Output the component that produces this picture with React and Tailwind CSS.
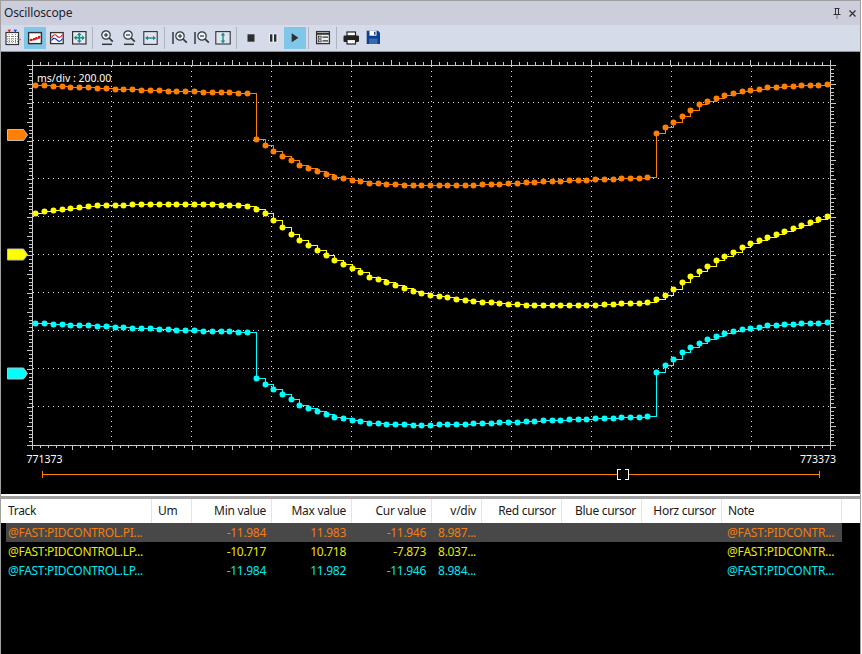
const FONT = "font-['Noto_Sans','Liberation_Sans',sans-serif]";

const xs = [];
for (let i = 0; i < 25; i++) xs.push(35 + i * 8.84);
for (let i = 0; i < 46; i++) xs.push(256 + i * 8.696);
for (let i = 0; i <= 20; i++) xs.push(656 + i * 8.55);

const orange = [[33,85],[100,88],[180,91],[255.5,93],[256,139],[265,145],[280,155],[300,165],[330,176],[370,183],[420,185.5],[470,185],[530,182],[600,179],[655.5,177],[656,133],[665,127],[680,117],[700,103],[730,93],[770,87],[830,84]];
const yellow = [[33,213],[60,209],[100,205],[150,204],[220,204.5],[250,206],[265,213],[280,226],[300,240],[330,258],[370,277],[420,293],[470,301],[520,304.5],[590,305],[650,302],[665,295],[690,276],[720,258],[750,243],[790,229],[830,215]];
const cyan = [[33,323],[100,326],[180,330],[255.5,332],[256,378],[265,384],[280,393],[300,405],[330,416],[370,423],[420,425],[470,423.5],[530,421],[600,418],[655.5,416],[656,372],[665,365],[680,353],[700,342],[730,331],[770,325],[830,322]];

function at(keys, x) {
  for (let i = 1; i < keys.length; i++) {
    if (x <= keys[i][0]) {
      const [x0, y0] = keys[i - 1];
      const [x1, y1] = keys[i];
      return y0 + ((y1 - y0) * (x - x0)) / (x1 - x0);
    }
  }
  return keys[keys.length - 1][1];
}

function Trace({ keys, color }) {
  const pts = xs.map((x) => [Math.round(x), Math.round(at(keys, x))]);
  let d = `M${pts[0][0]} ${pts[0][1]}`;
  for (let i = 1; i < pts.length; i++) d += `H${pts[i][0]}V${pts[i][1]}`;
  return (
    <g>
      <path d={d} transform="translate(.5 .5)" fill="none" stroke={color} strokeWidth="1" shapeRendering="crispEdges" />
      {pts.map(([x, y], i) => (
        <circle key={i} cx={x + 0.5} cy={y + 0.5} r="3" fill={color} />
      ))}
    </g>
  );
}

function Marker({ y, color }) {
  return (
    <path d={`M7.5 ${y - 5.5}H23.5L27.5 ${y}L23.5 ${y + 5.5}H7.5Z`} fill={color} stroke="#bdbdbd" strokeWidth="1" />
  );
}

function Chart() {
  const T = "#c8c8c8";
  const ticks = [];
  for (let i = 0; i <= 100; i++) {
    const x = 32 + i * 7.98;
    const major = i % 5 === 0;
    ticks.push(`M${Math.round(x) + 0.5} 65V${major ? 60 : 62}`);
    ticks.push(`M${Math.round(x) + 0.5} 445V${major ? 450 : 448}`);
  }
  for (let i = 0; i <= 100; i++) {
    const y = 65 + i * 3.8;
    const major = i % 5 === 0;
    ticks.push(`M32 ${Math.round(y) + 0.5}H${major ? 27 : 29}`);
    ticks.push(`M831 ${Math.round(y) + 0.5}H${major ? 836 : 834}`);
  }
  const grid = [];
  for (let i = 1; i < 10; i++) {
    grid.push(`M${32 + i * 80 - 0.5} 66V445`);
    grid.push(`M33 ${65 + i * 38 - 0.5}H830`);
  }
  return (
    <svg width="859" height="440" viewBox="1 52 859 440" className="block">
      <path d={grid.join("")} fill="none" stroke="#e0e0e0" strokeWidth="1" strokeDasharray="1 4" shapeRendering="crispEdges" />
      <path d="M32.5 65V445.5H830.5V65.5H32.5" fill="none" stroke={T} strokeWidth="1" shapeRendering="crispEdges" />
      <path d={ticks.join("")} fill="none" stroke={T} strokeWidth="1" shapeRendering="crispEdges" />
      <Marker y={135} color="#ff8000" />
      <Marker y={254.5} color="#ffff00" />
      <Marker y={373.5} color="#00ffff" />
      <Trace keys={orange} color="#ff7f00" />
      <Trace keys={yellow} color="#ffff00" />
      <Trace keys={cyan} color="#00ffff" />
      <text x="37" y="82" fill="#fff" fontSize="10.5" className={FONT}>ms/div : 200.00</text>
      <text x="26.5" y="463" fill="#fff" fontSize="10.5" className={FONT}>771373</text>
      <text x="836" y="463" textAnchor="end" fill="#fff" fontSize="10.5" className={FONT}>773373</text>
      <path d="M42.5 471V478M42 474.5H819M819.5 471V478" stroke="#ff7f00" fill="none" shapeRendering="crispEdges" />
      <rect x="618" y="470" width="11" height="9" fill="#000" />
      <path d="M621 469.5H617.5V479.5H621M625 469.5H628.5V479.5H625" stroke="#fff" fill="none" shapeRendering="crispEdges" />
    </svg>
  );
}

function Btn({ active, narrow, children }) {
  return (
    <div className={`h-[22px] flex items-center justify-center shrink-0 ${narrow ? "w-[21px]" : "w-[22px]"} ${active ? "bg-[#7fc6e9]" : ""}`}>
      <svg width="18" height="18" viewBox="0 0 18 18">{children}</svg>
    </div>
  );
}

function Sep({ className }) {
  return <div className={`w-px h-[22px] bg-[#b0b3be] shrink-0 ${className}`} />;
}

const D = "#2e3a40";
const TEAL = "#1b8a8c";

const ZoomGlass = ({ plus, cx = 8, cy = 6 }) => (
  <>
    <circle cx={cx} cy={cy} r="4.2" fill="#eef3f5" stroke={D} strokeWidth="1.2" />
    <path d={`M${cx - 2} ${cy}H${cx + 2}`} stroke={D} strokeWidth="1.2" />
    {plus && <path d={`M${cx} ${cy - 2}V${cy + 2}`} stroke={D} strokeWidth="1.2" />}
    <path d={`M${cx + 3.2} ${cy + 3.2}L${cx + 6.8} ${cy + 6.6}`} stroke={D} strokeWidth="1.7" />
  </>
);

function Toolbar() {
  return (
    <div className="h-[27px] bg-[#d6dbe9] border-b border-[#8f929b] flex items-center pl-[1px] shrink-0">
      <Btn>
        <rect x="2" y="3.5" width="12.5" height="12" fill="#fff" stroke="#333" strokeWidth="1.2" />
        <path d="M5 5V15M8.25 5V15M11.5 5V15M3 7.5H14M3 10H14M3 12.5H14" stroke="#666" strokeDasharray="1 1" strokeWidth=".8" />
        <path d="M5.3 1V3.5" stroke="#e02020" strokeWidth="1.4" /><path d="M3.8 1.2H6.8" stroke="#e02020" strokeWidth="1.2" />
        <path d="M11.3 1V3.5" stroke="#2040e0" strokeWidth="1.4" /><path d="M9.8 1.2H12.8" stroke="#2040e0" strokeWidth="1.2" />
        <path d="M14.5 10.5H17" stroke="#888" strokeWidth="1.2" />
      </Btn>
      <Btn active>
        <rect x="2.6" y="3.6" width="12.8" height="11" fill="#fff" stroke="#2f2f2f" strokeWidth="1.4" />
        <path d="M4.5 11H7V10.3H10V9.3H13.5V8" stroke="#d81010" fill="none" strokeWidth="1" />
        <circle cx="5" cy="11" r="1.3" fill="#e01010" /><circle cx="8" cy="10.3" r="1.3" fill="#e01010" /><circle cx="10.5" cy="9.3" r="1.3" fill="#e01010" /><circle cx="13.2" cy="8" r="1.3" fill="#e01010" />
      </Btn>
      <Btn>
        <rect x="2.6" y="3.6" width="12.6" height="11" fill="#fff" stroke="#333" strokeWidth="1.3" />
        <path d="M3.5 9C5.5 5 7 5 9 7S12.5 9 14.5 5.5" stroke="#e02020" fill="none" strokeWidth="1.1" />
        <path d="M3.5 11.5C5.5 8.5 7 9 9 11S12.5 13 14.5 9.5" stroke="#1030d0" fill="none" strokeWidth="1.1" />
      </Btn>
      <Btn>
        <rect x="2.6" y="2.6" width="13.4" height="12.4" fill="#e6ecf1" stroke="#333" strokeWidth="1.2" />
        <path d="M9.3 4.5V13M5 8.8H13.6" stroke={TEAL} strokeWidth="1.6" />
        <path d="M9.3 3.5L6.8 6.2H11.8ZM9.3 14L6.8 11.4H11.8ZM3.8 8.8L6.5 6.3V11.3ZM14.8 8.8L12.1 6.3V11.3Z" fill={TEAL} />
      </Btn>
      <Sep className="ml-[2px] mr-[3px]" />
      <Btn><ZoomGlass plus /><path d="M4 15.3H14" stroke={D} strokeWidth="1.5" /></Btn>
      <Btn><ZoomGlass /><path d="M4 15.3H14" stroke={D} strokeWidth="1.5" /></Btn>
      <Btn narrow>
        <rect x="1.8" y="2.6" width="13.4" height="12.8" fill="#dfe5ee" stroke="#333" strokeWidth="1.1" />
        <path d="M4 9H13" stroke={TEAL} strokeWidth="1.4" />
        <path d="M3 9L6 6.8V11.2ZM14 9L11 6.8V11.2Z" fill={TEAL} />
      </Btn>
      <Sep className="ml-[3px] mr-[4px]" />
      <Btn><path d="M2 3V15" stroke={D} strokeWidth="1.5" /><ZoomGlass plus cx={9} cy={7} /></Btn>
      <Btn narrow><path d="M2 3V15" stroke={D} strokeWidth="1.5" /><ZoomGlass cx={9} cy={7} /></Btn>
      <Btn narrow>
        <rect x="1.8" y="2.6" width="14.4" height="12.4" fill="#dfe5ee" stroke="#333" strokeWidth="1.1" />
        <path d="M9 5V13" stroke={TEAL} strokeWidth="1.4" />
        <path d="M9 3.5L6.8 6.5H11.2ZM9 14.5L6.8 11.5H11.2Z" fill={TEAL} />
      </Btn>
      <Sep className="ml-[3px] mr-[3px]" />
      <Btn><rect x="5.5" y="5.3" width="7" height="7.4" fill="#2e2e2e" /></Btn>
      <Btn>
        <rect x="5" y="4.5" width="8.5" height="9" fill="#eef1f6" />
        <rect x="6" y="5.3" width="2.4" height="7.4" fill="#2e2e2e" /><rect x="10" y="5.3" width="2.4" height="7.4" fill="#2e2e2e" />
      </Btn>
      <Btn active><path d="M5.7 4.3V13.3L12.4 8.8Z" fill="#2e2e2e" /></Btn>
      <Sep className="ml-[2px] mr-[3px]" />
      <Btn>
        <rect x="2.6" y="2.6" width="12.8" height="12" fill="#eef2f4" stroke="#333" strokeWidth="1.3" />
        <path d="M2.6 4.8H15.4" stroke="#333" strokeWidth="2" />
        <rect x="4.5" y="7.2" width="2.6" height="2" fill="none" stroke="#333" strokeWidth=".8" />
        <rect x="4.5" y="10.8" width="2.6" height="2" fill="none" stroke="#333" strokeWidth=".8" />
        <path d="M8.5 8.2H14M8.5 11.8H14" stroke="#333" strokeWidth="1.3" />
      </Btn>
      <Sep className="ml-[2px] mr-[3px]" />
      <Btn>
        <rect x="5" y="3" width="8.5" height="4" fill="#fff" stroke="#222" strokeWidth="1.2" />
        <rect x="1.5" y="6.5" width="15.5" height="6.5" rx="1.2" fill="#222" />
        <rect x="5" y="10.5" width="8.5" height="4.5" fill="#fff" stroke="#222" strokeWidth="1.2" />
      </Btn>
      <Btn>
        <path d="M2.7 1.7H14L16 3.7V15H2.7Z" fill="#0a3f91" />
        <rect x="5.5" y="1.7" width="7" height="5" fill="#fff" /><rect x="10" y="2.7" width="1.5" height="3" fill="#0a3f91" />
        <rect x="5" y="9.5" width="8.5" height="5.5" fill="#3b69ad" />
      </Btn>
    </div>
  );
}

const cols = [
  ["Track", 150, "left"], ["Um", 40, "left"], ["Min value", 80, "right"], ["Max value", 80, "right"],
  ["Cur value", 80, "right"], ["v/div", 50, "right"], ["Red cursor", 80, "right"], ["Blue cursor", 80, "right"],
  ["Horz cursor", 80, "right"], ["Note", 120, "left"],
];

const rows = [
  { color: "text-[#f07d12]", bg: "bg-[#484848]", v: ["@FAST:PIDCONTROL.PI...", "", "-11.984", "11.983", "-11.946", "8.987...", "", "", "", "@FAST:PIDCONTR..."] },
  { color: "text-[#e8e800]", bg: "", v: ["@FAST:PIDCONTROL.LP...", "", "-10.717", "10.718", "-7.873", "8.037...", "", "", "", "@FAST:PIDCONTR..."] },
  { color: "text-[#00e8f0]", bg: "", v: ["@FAST:PIDCONTROL.LP...", "", "-11.984", "11.982", "-11.946", "8.984...", "", "", "", "@FAST:PIDCONTR..."] },
];

function Table() {
  return (
    <div className={`flex-1 bg-black text-[12px] leading-[19px] ${FONT}`}>
      <div className="h-[24px] bg-white flex text-[#1a1a1a] tracking-[-0.3px] pl-[1px]">
        {cols.map(([name, w, align], i) => (
          <div key={i} style={{ width: w }} className={`shrink-0 h-full pl-[6px] pr-[5px] border-r border-[#e5e5e5] leading-[24px] ${align === "right" ? "text-right" : "text-left"}`}>
            {name}
          </div>
        ))}
      </div>
      {rows.map((r, ri) => (
        <div key={ri} className={`h-[19px] w-[836px] ml-[5px] flex tracking-[-0.3px] ${r.bg} ${r.color}`}>
          {r.v.map((t, i) => {
            const w = i === 0 ? 145 : cols[i][1];
            return (
              <div key={i} style={{ width: w }} className={`shrink-0 pr-[5px] whitespace-nowrap overflow-hidden ${i === 9 ? "pl-[6px] tracking-[-0.2px]" : "pl-[2px]"} ${cols[i][2] === "right" ? "text-right" : "text-left"}`}>
                {t}
              </div>
            );
          })}
        </div>
      ))}
    </div>
  );
}

export default function App() {
  return (
    <div className="w-[862px] h-[654px] bg-white overflow-hidden">
      <div className="w-[861px] h-[654px] flex flex-col border-t border-l border-r border-[#a0a0a0]">
        <div className={`h-[24px] bg-[#cccedb] flex items-center justify-between pl-[3px] pr-[4px] text-[12px] tracking-[-0.17px] text-[#1c2433] shrink-0 ${FONT}`}>
          <span>Oscilloscope</span>
          <span className="flex items-center gap-[8px]">
            <svg width="8" height="11" viewBox="0 0 8 11"><path d="M2.5 .5V6.5M5.5 .5V6.5M1.5 .5H6.5M.5 6.5H7.5" stroke="#333" fill="none" /><path d="M4 7V11" stroke="#777" /></svg>
            <svg width="7" height="7" viewBox="0 0 7 7"><path d="M.5 .5L6.5 6.5M6.5 .5L.5 6.5" stroke="#333" strokeWidth="1.3" /></svg>
          </span>
        </div>
        <Toolbar />
        <div className="h-[440px] bg-black shrink-0"><Chart /></div>
        <div className="h-[2px] bg-black shrink-0" />
        <div className="h-[5px] shrink-0 bg-white border-b-[3px] border-[#a0a0a0]" />
        <Table />
      </div>
    </div>
  );
}
